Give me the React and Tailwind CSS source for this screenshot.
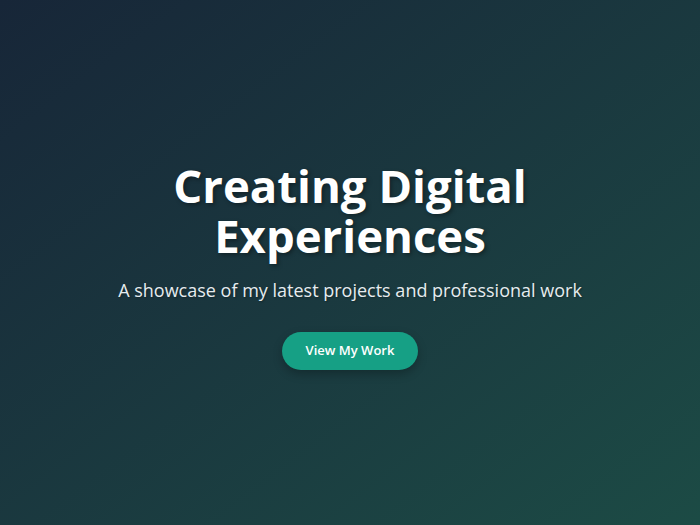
export default function App() {
  return (
    <div
      className="w-[700px] h-[525px] pt-[5px] bg-gradient-to-br from-[#172638] to-[#1c4b45] flex flex-col items-center justify-center text-center"
      style={{ fontFamily: '"Open Sans", "Noto Sans", sans-serif' }}
    >
      <h1 className="text-[45.5px] leading-[50px] font-bold text-white [text-shadow:2px_2px_4px_rgba(0,0,0,0.35)]">
        Creating Digital
        <br />
        Experiences
      </h1>
      <p className="mt-[17px] text-[18px] leading-[26px] text-[#e6ecef] [text-shadow:1px_1px_2px_rgba(0,0,0,0.3)]">
        A showcase of my latest projects and professional work
      </p>
      <button className="mt-[29px] h-[38px] px-[24px] rounded-full bg-[#16a085] text-white text-[13px] font-semibold shadow-[0_4px_10px_rgba(0,0,0,0.25)]">
        View My Work
      </button>
    </div>
  );
}
